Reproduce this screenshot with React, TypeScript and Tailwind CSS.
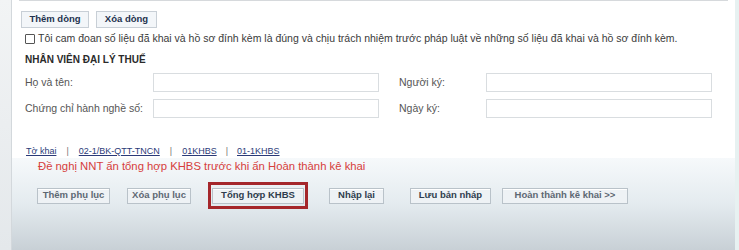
const sans = "font-['Liberation_Sans',Arial,sans-serif]";

function TopButton({ label, w }: { label: string; w: string }) {
  return (
    <div
      className={`${w} h-[17px] flex items-center justify-center bg-[#f3f6f9] border border-[#c8cfd6] text-[9.5px] font-bold text-[#23324e]`}
    >
      {label}
    </div>
  );
}

function ActionButton({ label, w, dim }: { label: string; w: string; dim?: boolean }) {
  return (
    <div
      className={`${w} h-[16px] flex items-center justify-center bg-[#eef2f5] border border-[#b9c2c9] shadow-[inset_0_1px_0_#ffffff] text-[9.5px] font-bold ${dim ? 'text-[#5d6873]' : 'text-[#2f3d4d]'}`}
    >
      {label}
    </div>
  );
}

function Field({ w }: { w: string }) {
  return <div className={`${w} h-[19px] bg-white border border-[#d9dde0]`} />;
}

export default function App() {
  return (
    <div className={`w-[739px] h-[250px] flex overflow-hidden bg-[#eef1f3] ${sans}`}>
      {/* left page edge */}
      <div className="w-[12px] shrink-0 bg-gradient-to-b from-[#f2f4f5] to-[#e4e8eb] border-r border-[#d3d8dc]" />

      <div className="flex-1 flex flex-col">
        {/* white form area */}
        <div className="h-[158px] bg-white flex flex-col">
          <div className="mx-[7px] h-[2px] bg-[#f1f2f3] border-b border-[#d6d9dc]" />

          <div className="flex gap-[7px] ml-[9px] mt-[10px]">
            <TopButton label="Thêm dòng" w="w-[68px]" />
            <TopButton label="Xóa dòng" w="w-[61px]" />
          </div>

          <div className="flex items-center ml-[13px] mt-[5px] h-[12px] text-[10.5px] text-[#3a3a3a]">
            <div className="w-[10px] h-[10px] border border-[#555] rounded-[1px] bg-white mr-[3px]" />
            <span>
              Tôi cam đoan số liệu đã khai và hồ sơ đính kèm là đúng và chịu trách nhiệm trước pháp luật về những số liệu đã khai và hồ sơ đính kèm.
            </span>
          </div>

          <div className="ml-[13px] mt-[8px] text-[10px] font-bold text-[#2a2a2a] leading-[13px]">
            NHÂN VIÊN ĐẠI LÝ THUẾ
          </div>

          <div className="flex flex-col gap-[7px] ml-[13px] mt-[7px] text-[10.5px] text-[#555]">
            <div className="flex items-center">
              <span className="w-[128px]">Họ và tên:</span>
              <Field w="w-[226px]" />
              <span className="w-[87px] ml-[20px]">Người ký:</span>
              <Field w="w-[226px]" />
            </div>
            <div className="flex items-center">
              <span className="w-[128px]">Chứng chỉ hành nghề số:</span>
              <Field w="w-[226px]" />
              <span className="w-[87px] ml-[20px]">Ngày ký:</span>
              <Field w="w-[226px]" />
            </div>
          </div>

          <div className="flex items-center ml-[14px] mt-[27px] text-[9px] text-[#2a3a78]">
            <span className="underline">Tờ khai</span>
            <span className="mx-[10px] text-[#777]">|</span>
            <span className="underline">02-1/BK-QTT-TNCN</span>
            <span className="mx-[10px] text-[#777]">|</span>
            <span className="underline">01KHBS</span>
            <span className="mx-[9px] text-[#777]">|</span>
            <span className="underline">01-1KHBS</span>
          </div>
        </div>

        {/* action bar */}
        <div className="flex-1 bg-gradient-to-b from-[#f6f9fb] via-[#e4ebef] to-[#c8d0d6] flex flex-col">
          <div className="ml-[26px] mt-[1px] text-[11.3px] text-[#d6403c] leading-[14px]">
            Đề nghị NNT ấn tổng hợp KHBS trước khi ấn Hoàn thành kê khai
          </div>

          <div className="flex items-center ml-[25px] mt-[9px]">
            <ActionButton label="Thêm phụ lục" w="w-[73px]" dim />
            <div className="ml-[17px]">
              <ActionButton label="Xóa phụ lục" w="w-[64px]" dim />
            </div>
            <div className="ml-[17px] w-[100px] h-[27px] border-[3px] border-[#a5272b] flex items-center justify-center">
              <ActionButton label="Tổng hợp KHBS" w="w-[92px]" />
            </div>
            <div className="ml-[21px]">
              <ActionButton label="Nhập lại" w="w-[55px]" />
            </div>
            <div className="ml-[26px]">
              <ActionButton label="Lưu bản nháp" w="w-[81px]" />
            </div>
            <div className="ml-[11px]">
              <ActionButton label="Hoàn thành kê khai >>" w="w-[126px]" dim />
            </div>
          </div>
        </div>
      </div>

      {/* right page edge */}
      <div className="w-[4px] shrink-0 bg-[#e7f1f1]" />
    </div>
  );
}
